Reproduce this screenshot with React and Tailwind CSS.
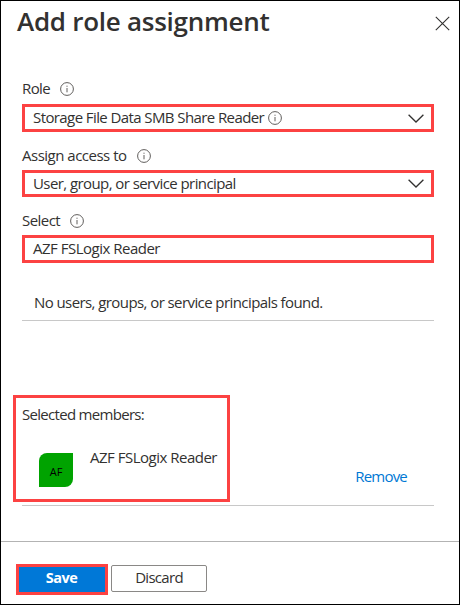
function InfoIcon({ className = "" }) {
  return (
    <svg className={`shrink-0 ${className}`} width="14" height="14" viewBox="0 0 14 14" fill="none">
      <circle cx="7" cy="7" r="6.4" stroke="#605e5c" strokeWidth="1" />
      <path d="M7 6v4.3M7 3.7v1.1" stroke="#605e5c" strokeWidth="1" />
    </svg>
  );
}

function Chevron() {
  return (
    <svg className="shrink-0" width="16" height="9" viewBox="0 0 16 9" fill="none">
      <path d="M0.6 0.7L8 8L15.4 0.7" stroke="#323130" strokeWidth="1.3" />
    </svg>
  );
}

function Label({ children, className = "" }) {
  return (
    <div className="flex h-5 items-center">
      <span className={`pb-[2px] whitespace-nowrap ${className}`}>{children}</span>
      <InfoIcon />
    </div>
  );
}

export default function App() {
  return (
    <div className="flex h-[605px] w-[460px] flex-col border border-black bg-white font-['Open_Sans','Noto_Sans',sans-serif] text-[15px] leading-5 text-[#323130]">
      <header className="flex h-[78px] items-start justify-between pr-[9px] pl-[16px]">
        <h1 className="mt-[2px] text-[26px] leading-9 font-semibold tracking-[-0.27px] whitespace-nowrap">Add role assignment</h1>
        <svg className="mt-[15px]" width="15" height="15" viewBox="0 0 15 15" fill="none">
          <path d="M0.8 0.8L14.2 14.2M14.2 0.8L0.8 14.2" stroke="#323130" strokeWidth="1.1" />
        </svg>
      </header>

      <main className="flex h-[462px] flex-col pr-[25px] pl-[21px]">
        <Label className="w-[38px] tracking-[-0.6px]">Role</Label>
        <div className="mt-[5px] flex h-7 shrink-0 items-center border-3 border-[#fc4242] pr-[7px] pl-[8px]">
          <span className="w-[235px] pb-[2px] tracking-[-0.59px] whitespace-nowrap">Storage File Data SMB Share Reader</span>
          <InfoIcon />
          <span className="grow" />
          <Chevron />
        </div>
        <div className="mt-[14px]">
          <Label className="w-[115px] tracking-[-0.5px]">Assign access to</Label>
        </div>
        <div className="mt-[4px] flex h-[27px] shrink-0 items-center justify-between border-3 border-[#fc4242] pr-[7px] pl-[8px]">
          <span className="pb-[2px] tracking-[-0.58px]">User, group, or service principal</span>
          <Chevron />
        </div>
        <div className="mt-[14px]">
          <Label className="w-[48px] tracking-[-0.55px]">Select</Label>
        </div>
        <div className="mt-[4px] flex h-7 shrink-0 items-center border-3 border-[#fc4242] pl-[8px]">
          <span className="pb-[2px] tracking-[-0.5px]">AZF FSLogix Reader</span>
        </div>
        <div className="flex h-[58px] shrink-0 items-end border-b border-[#c8c8c8] pb-[8px] pl-[12px]">
          <span className="tracking-[-0.58px]">No users, groups, or service principals found.</span>
        </div>

        <section className="mt-[74px] flex h-[111px] shrink-0 items-start justify-between border-b border-[#c8c8c8]">
          <div className="-ml-[9px] h-[107px] w-[217px] shrink-0 border-3 border-[#fc4242] pt-[6px] pl-[6px]">
            <p className="tracking-[-0.7px]">Selected members:</p>
            <div className="mt-[23px] flex pl-[17px]">
              <div className="mt-[6px] flex size-[34px] shrink-0 items-center justify-center rounded-tl-[8px] rounded-br-[8px] bg-[#00a300] pt-[2px] text-[11px] leading-none text-black">
                AF
              </div>
              <span className="ml-[17px] tracking-[-0.5px] whitespace-nowrap">AZF FSLogix Reader</span>
            </div>
          </div>
          <a className="mt-[71px] mr-[27px] tracking-[-0.8px] text-[#0078d4]">Remove</a>
        </section>
      </main>

      <footer className="flex h-[63px] items-start border-t border-[#b3b3b3] pl-[15px]">
        <button className="mt-[22px] h-[31px] w-[92px] border-3 border-[#fc4242] bg-[#0078d7] pr-[1px] pb-[3px] text-[14.5px] leading-5 font-bold tracking-[-0.5px] text-white">
          Save
        </button>
        <button className="mt-[23px] ml-[3px] h-[27px] w-[96px] rounded-[2px] border border-[#8a8886] bg-white pb-[4px] text-[15px] leading-5 tracking-[-0.7px]">
          Discard
        </button>
      </footer>
    </div>
  );
}
